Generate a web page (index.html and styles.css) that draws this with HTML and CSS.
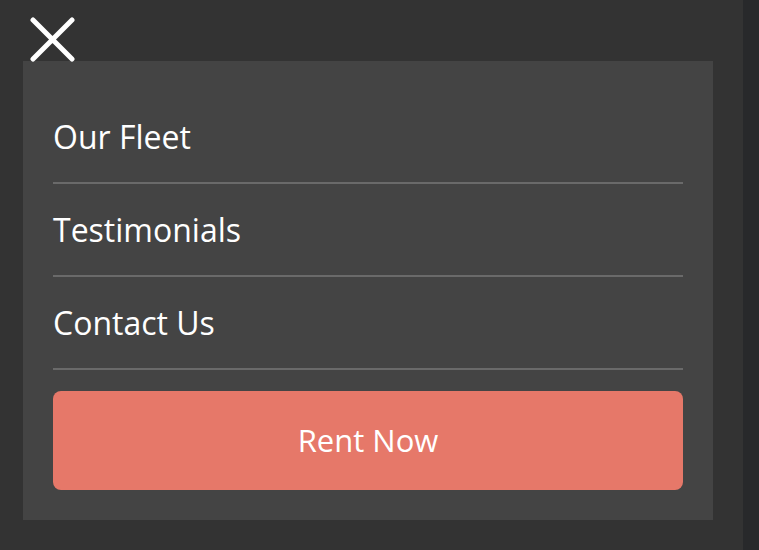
FILE: index.html
```html
<!DOCTYPE html>
<html lang="en">
<head>
<meta charset="utf-8">
<title>Menu</title>
<link rel="stylesheet" href="styles.css">
</head>
<body>
<div class="page">
  <div class="stage">
    <button class="close" aria-label="Close menu">
      <svg width="45" height="45" viewBox="0 0 45 45">
        <path d="M3 3 L42 42 M42 3 L3 42" stroke="#ffffff" stroke-width="5" stroke-linecap="round" fill="none"/>
      </svg>
    </button>
    <nav class="panel">
      <ul class="menu">
        <li class="item"><a href="#">Our Fleet</a></li>
        <li class="item"><a href="#">Testimonials</a></li>
        <li class="item"><a href="#">Contact Us</a></li>
      </ul>
      <a class="cta" href="#">Rent Now</a>
    </nav>
  </div>
  <div class="strip"></div>
</div>
</body>
</html>
```

FILE: styles.css
```css
html, body {
  margin: 0;
  padding: 0;
  height: 100%;
}
body {
  background: #333333;
  font-family: "Open Sans", "Noto Sans", sans-serif;
  color: #ffffff;
}
.page {
  display: flex;
  height: 550px;
}
.stage {
  position: relative;
  flex: 1;
  padding: 61px 30px 0 23px;
}
.strip {
  width: 16px;
  background: #28292b;
}
.close {
  position: absolute;
  left: 30px;
  top: 17px;
  width: 45px;
  height: 45px;
  padding: 0;
  border: 0;
  background: none;
  z-index: 2;
}
.close svg {
  display: block;
}
.panel {
  width: 630px;
  background: #444444;
  padding: 30px;
}
.menu {
  list-style: none;
  margin: 0;
  padding: 0;
}
.item {
  padding: 23px 0;
  border-bottom: 2px solid #6a6a6a;
  font-size: 32px;
  line-height: 45px;
}
.item a {
  color: #ffffff;
  text-decoration: none;
}
.cta {
  display: block;
  margin-top: 21px;
  height: 99px;
  line-height: 99px;
  background: #e67869;
  border-radius: 8px;
  text-align: center;
  font-size: 31px;
  color: #ffffff;
  text-decoration: none;
}
```
